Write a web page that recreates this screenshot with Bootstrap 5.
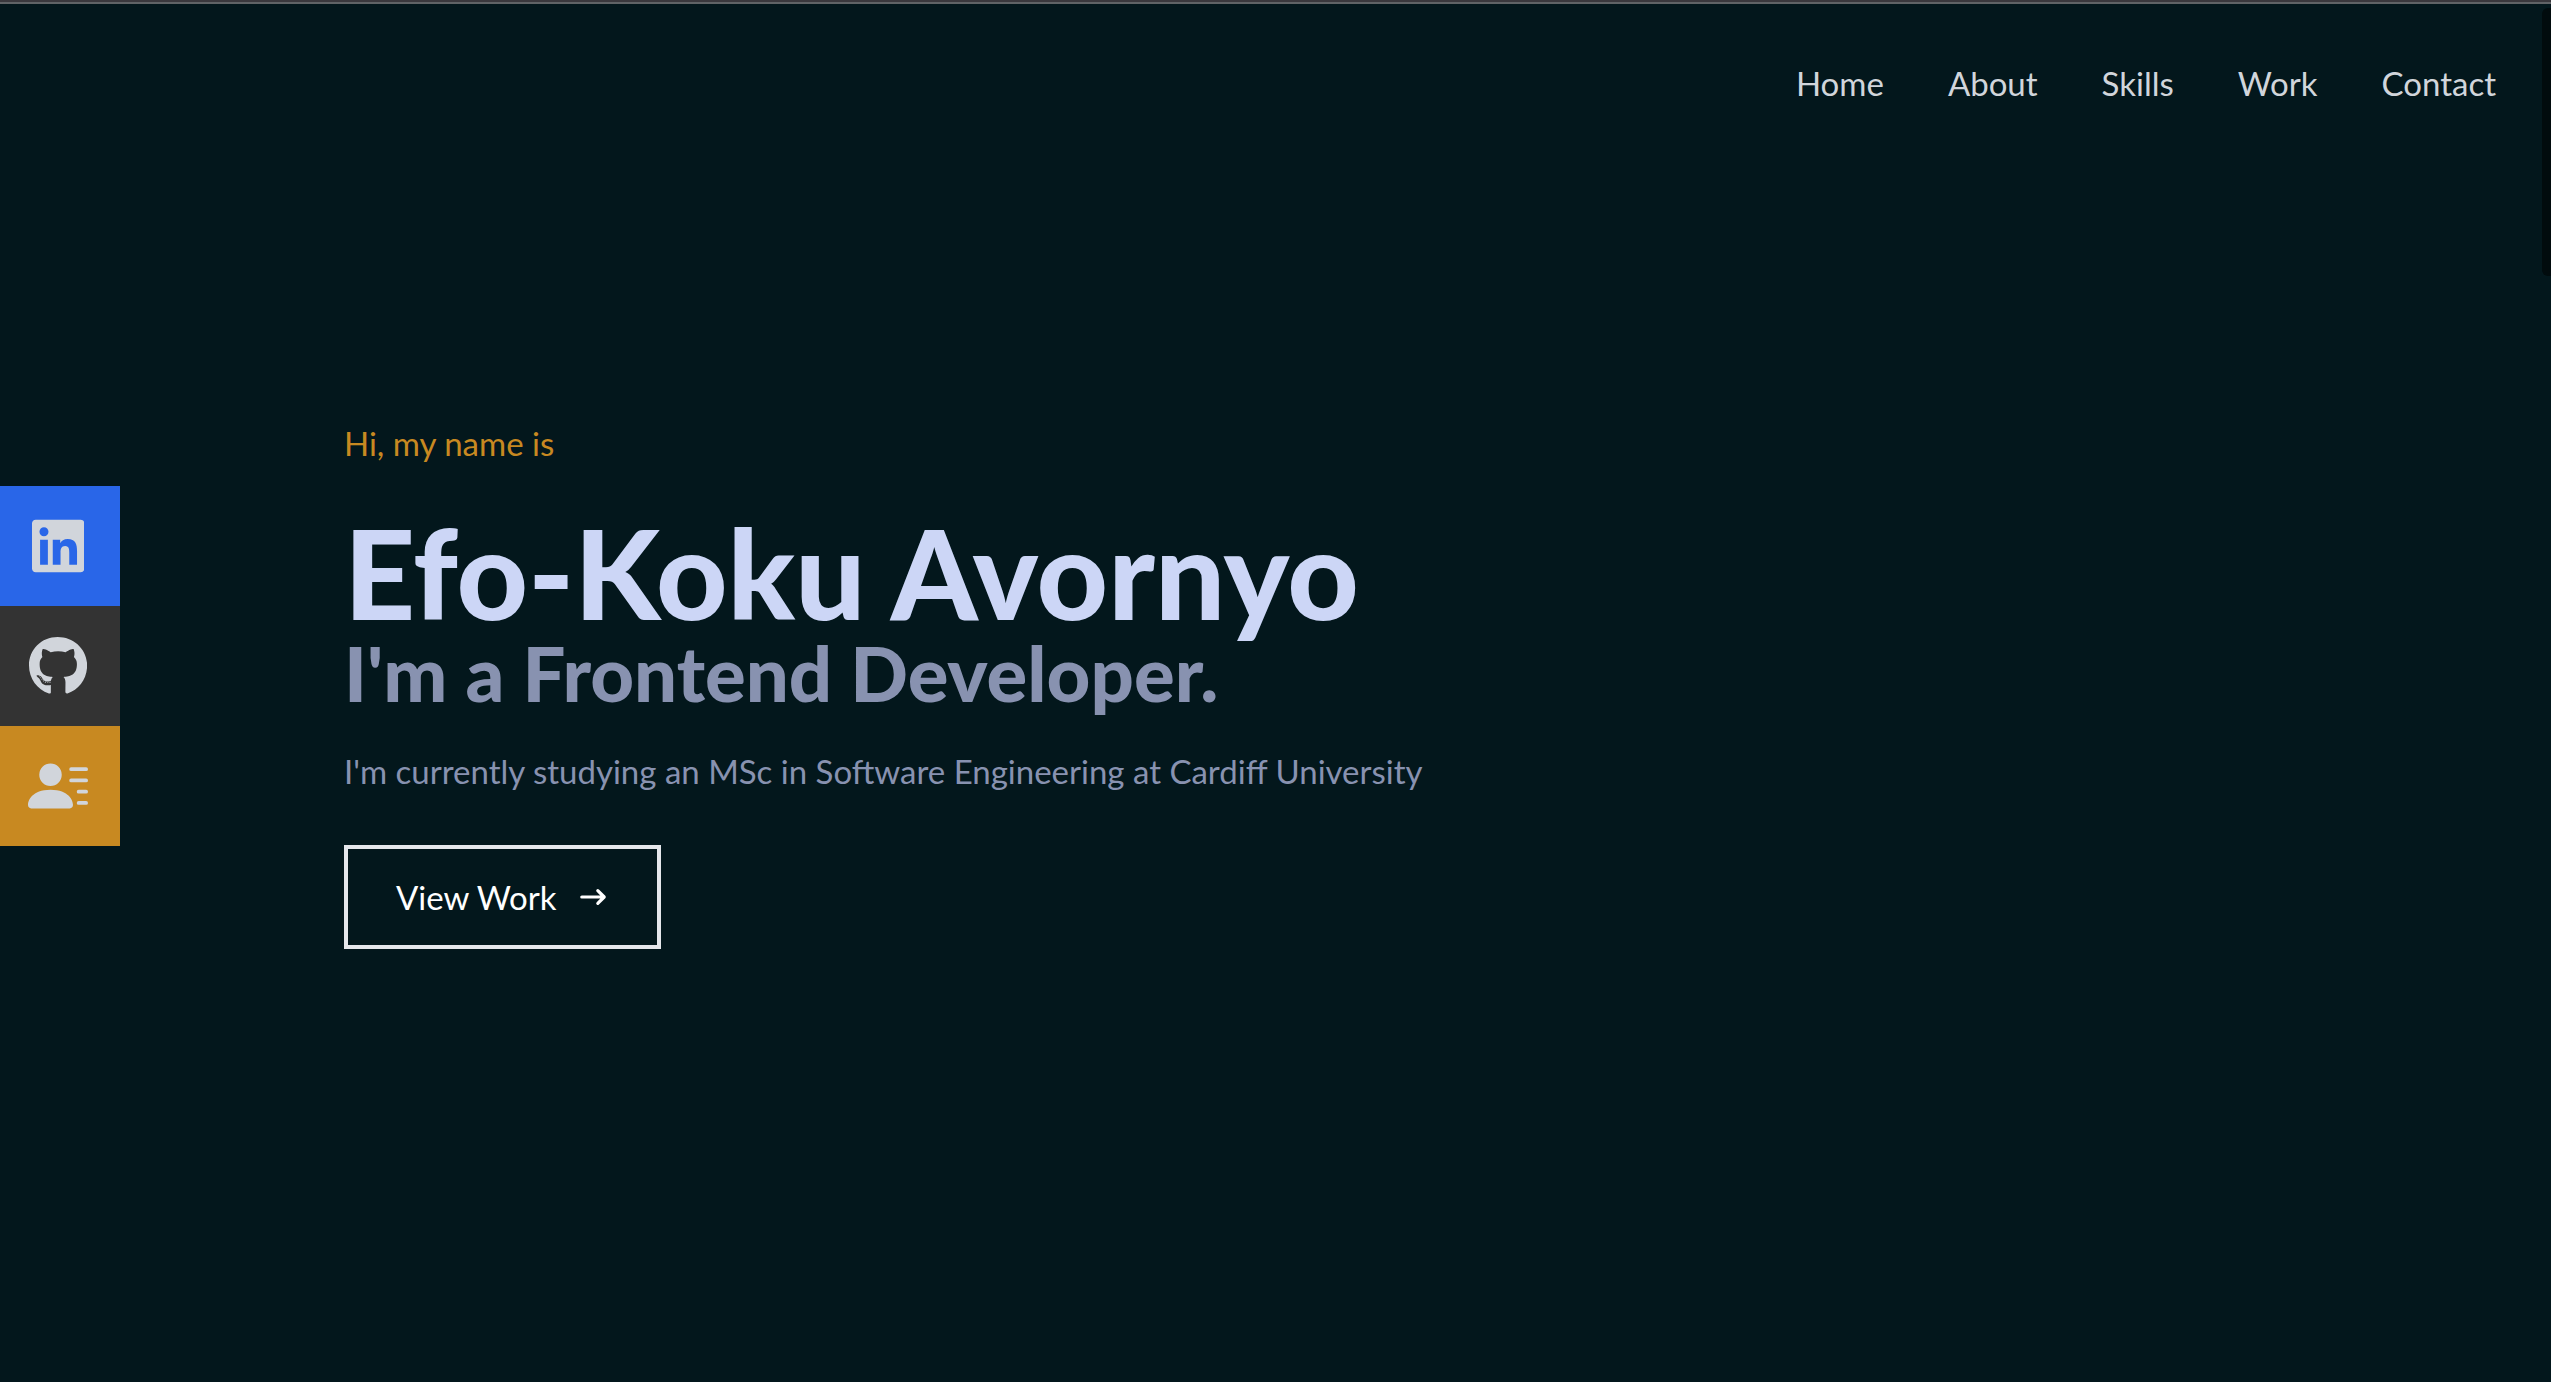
<!DOCTYPE html>
<html lang="en">
<head>
<meta charset="utf-8">
<meta name="viewport" content="width=device-width, initial-scale=1">
<title>Efo-Koku Avornyo</title>
<link href="https://cdn.jsdelivr.net/npm/bootstrap@5.3.0/dist/css/bootstrap.min.css" rel="stylesheet">
<style>
body{background:#03171c;color:#d1d5db;font-family:Lato,sans-serif;font-size:33px;line-height:48px;min-height:100vh;border-top:2px solid #3a383d}
.site-top{border-top:2px solid #606366;padding:55px 55px 57px 0}
.site-top .nav{gap:64px}
.site-top .nav-link{color:#d1d5db}
.social{padding-top:322px}
.social a{width:120px;height:120px;padding-left:28px;padding-right:32px;color:#d1d5db}
.social svg{height:60px}
.tile-blue{background:#2966e8}
.tile-dark{background:#333}
.tile-gold{background:#c88921}
.hero{padding:255px 64px 64px 224px}
.intro{color:#c88921;margin-bottom:45px}
.hero h1{color:#ccd6f6;font-size:124px;line-height:120px;font-weight:900;margin-bottom:5px}
.hero h2{color:#8892b0;font-size:76px;line-height:72px;font-weight:900;margin-bottom:38px}
.about-me{color:#8892b0;margin-bottom:50px}
.btn-work{--bs-btn-color:#fff;--bs-btn-border-color:#e5e7eb;--bs-btn-border-width:4px;--bs-btn-border-radius:0;--bs-btn-font-size:33px;--bs-btn-line-height:48px;--bs-btn-padding-x:48px;--bs-btn-padding-y:24px;gap:20px}
.scroll-thumb{top:8px;right:0;width:9px;height:268px;background:#010b0d;border-radius:6px 0 0 6px}
</style>
<script src="https://cdn.jsdelivr.net/npm/bootstrap@5.3.0/dist/js/bootstrap.bundle.min.js"></script>
</head>
<body class="d-flex flex-column">
<header class="site-top">
  <nav aria-label="Main">
    <ul class="nav justify-content-end">
      <li class="nav-item"><a class="nav-link p-0" href="#home">Home</a></li>
      <li class="nav-item"><a class="nav-link p-0" href="#about">About</a></li>
      <li class="nav-item"><a class="nav-link p-0" href="#skills">Skills</a></li>
      <li class="nav-item"><a class="nav-link p-0" href="#work">Work</a></li>
      <li class="nav-item"><a class="nav-link p-0" href="#contact">Contact</a></li>
    </ul>
  </nav>
</header>
<main class="d-flex flex-fill align-items-start" id="home">
  <aside class="social d-flex flex-column flex-shrink-0">
    <a class="tile-blue d-flex align-items-center justify-content-center" href="#linkedin" aria-label="LinkedIn"><svg viewBox="0 0 448 512" fill="currentColor"><path d="M416 32H31.9C14.3 32 0 46.5 0 64.3v383.4C0 465.5 14.3 480 31.9 480H416c17.6 0 32-14.5 32-32.3V64.3c0-17.8-14.4-32.3-32-32.3zM135.4 416H69V202.2h66.5V416zm-33.2-243c-21.3 0-38.5-17.3-38.5-38.5S80.9 96 102.2 96c21.2 0 38.5 17.3 38.5 38.5 0 21.3-17.2 38.5-38.5 38.5zm282.1 243h-66.4V312c0-24.8-.5-56.7-34.5-56.7-34.6 0-39.9 27-39.9 54.9V416h-66.4V202.2h63.7v29.2h.9c8.9-16.8 30.6-34.5 62.9-34.5 67.2 0 79.7 44.3 79.7 101.9V416z"/></svg></a>
    <a class="tile-dark d-flex align-items-center justify-content-center" href="#github" aria-label="GitHub"><svg viewBox="0 0 496 512" fill="currentColor"><path d="M165.900 397.400c0 2-2.300 3.600-5.200 3.600-3.300.3-5.600-1.300-5.600-3.600 0-2 2.300-3.600 5.200-3.600 3-.3 5.600 1.300 5.600 3.600zm-31.100-4.500c-.7 2 1.300 4.300 4.300 4.900 2.600 1 5.600 0 6.200-2s-1.300-4.300-4.300-5.200c-2.600-.7-5.500.3-6.200 2.300zm44.200-1.700c-2.900.7-4.900 2.600-4.600 4.900.3 2 2.900 3.300 5.900 2.600 2.900-.7 4.900-2.600 4.600-4.600-.3-1.900-3-3.200-5.900-2.900zM244.800 8C106.100 8 0 113.300 0 252c0 110.900 69.800 205.800 169.500 239.200 12.800 2.300 17.300-5.600 17.300-12.100 0-6.200-.3-40.400-.3-61.400 0 0-70 15-84.700-29.800 0 0-11.400-29.100-27.800-36.600 0 0-22.900-15.700 1.600-15.400 0 0 24.900 2 38.600 25.800 21.900 38.600 58.600 27.500 72.900 20.900 2.300-16 8.800-27.100 16-33.700-55.900-6.200-112.300-14.300-112.300-110.500 0-27.500 7.600-41.300 23.600-58.900-2.600-6.500-11.100-33.300 2.600-67.900 20.900-6.500 69 27 69 27 20-5.600 41.500-8.500 62.800-8.500s42.800 2.900 62.800 8.500c0 0 48.100-33.600 69-27 13.700 34.700 5.200 61.400 2.600 67.900 16 17.700 25.800 31.500 25.800 58.900 0 96.500-58.900 104.200-114.800 110.500 9.200 7.900 17 22.900 17 46.400 0 33.700-.3 75.400-.3 83.600 0 6.500 4.600 14.400 17.300 12.100C428.200 457.800 496 362.900 496 252 496 113.300 383.500 8 244.800 8zM97.200 352.900c-1.300 1-1 3.300.7 5.200 1.600 1.600 3.900 2.300 5.200 1 1.300-1 1-3.300-.7-5.200-1.600-1.600-3.900-2.300-5.200-1zm-10.800-8.100c-.7 1.300.3 2.900 2.300 3.900 1.600 1 3.600.7 4.300-.7.700-1.300-.3-2.900-2.300-3.900-2-.6-3.600-.3-4.300.7zm32.400 35.600c-1.600 1.300-1 4.300 1.300 6.200 2.300 2.300 5.200 2.600 6.500 1 1.300-1.300.7-4.300-1.300-6.200-2.200-2.300-5.200-2.600-6.500-1zm-11.400-14.700c-1.600 1-1.600 3.600 0 5.900 1.600 2.300 4.300 3.300 5.600 2.300 1.600-1.300 1.600-3.900 0-6.200-1.400-2.300-4-3.300-5.600-2z"/></svg></a>
    <a class="tile-gold d-flex align-items-center justify-content-center" href="#resume" aria-label="Resume"><svg viewBox="0 0 16 16" fill="currentColor"><path d="M6 8a3 3 0 1 0 0-6 3 3 0 0 0 0 6zm-5 6s-1 0-1-1 1-4 6-4 6 3 6 4-1 1-1 1H1zM11 3.500a.5.5 0 0 1 .5-.5h4a.5.5 0 0 1 0 1h-4a.5.5 0 0 1-.5-.5zm.5 2.500a.5.5 0 0 0 0 1h4a.5.5 0 0 0 0-1h-4zm2 3a.5.5 0 0 0 0 1h2a.5.5 0 0 0 0-1h-2zm0 3a.5.5 0 0 0 0 1h2a.5.5 0 0 0 0-1h-2z"/></svg></a>
  </aside>
  <section class="hero flex-fill">
    <p class="intro">Hi, my name is</p>
    <h1>Efo-Koku Avornyo</h1>
    <h2>I'm a Frontend Developer.</h2>
    <p class="about-me">I'm currently studying an MSc in Software Engineering at Cardiff University</p>
    <button type="button" class="btn btn-work d-inline-flex align-items-center">View Work
      <svg width="32" height="32" viewBox="0 0 20 20" fill="currentColor" aria-hidden="true"><path fill-rule="evenodd" d="M12.293 5.293a1 1 0 0 1 1.414 0l4 4a1 1 0 0 1 0 1.414l-4 4a1 1 0 0 1-1.414-1.414L14.586 11H3a1 1 0 1 1 0-2h11.586l-2.293-2.293a1 1 0 0 1 0-1.414z"/></svg>
    </button>
  </section>
</main>
<div class="scroll-thumb position-fixed" aria-hidden="true"></div>
</body>
</html>
